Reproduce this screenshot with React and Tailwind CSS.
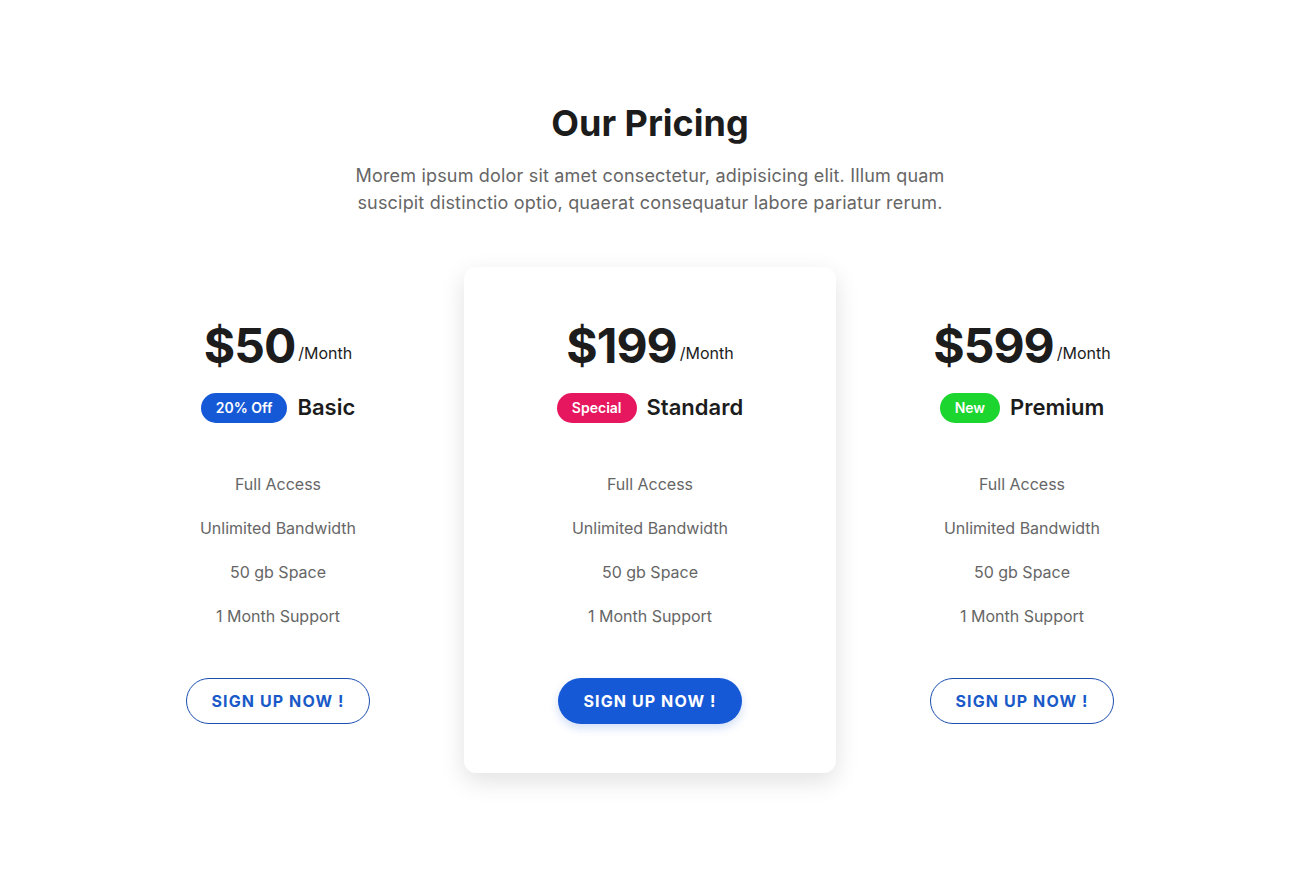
import React from 'react';

const plans = [
    { price: '$50', name: 'Basic', badge: '20% Off', badgeClass: 'bg-[#1659d6]', featured: false },
    { price: '$199', name: 'Standard', badge: 'Special', badgeClass: 'bg-[#e6175e]', featured: true },
    { price: '$599', name: 'Premium', badge: 'New', badgeClass: 'bg-[#1dd52f]', featured: false },
];

const features = ['Full Access', 'Unlimited Bandwidth', '50 gb Space', '1 Month Support'];

function PlanCard({ plan }) {
    return (
        <div
            className={
                'flex flex-col items-center pt-[55px] pb-[49px] rounded-xl ' +
                (plan.featured ? 'bg-white shadow-[0_8px_24px_rgba(0,0,0,0.12)]' : '')
            }
        >
            <div className="flex items-baseline">
                <span className="text-[48px] leading-[48px] font-bold text-[#1c1c1c] tracking-[-1px]">{plan.price}</span>
                <span className="text-base text-[#1c1c1c] ml-[3px] -translate-y-1">/Month</span>
            </div>

            <div className="flex items-center gap-[10px] mt-[21px]">
                <span className={'h-[30px] px-[15px] rounded-full flex items-center text-white text-sm font-semibold ' + plan.badgeClass}>
                    {plan.badge}
                </span>
                <span className="text-[22px] font-semibold text-[#1c1c1c]">{plan.name}</span>
            </div>

            <ul className="flex flex-col items-center gap-5 mt-[48px]">
                {features.map((f) => (
                    <li key={f} className="text-base leading-6 text-[#666666]">{f}</li>
                ))}
            </ul>

            <button
                className={
                    'mt-[50px] w-[184px] h-[46px] rounded-full text-base font-bold uppercase tracking-[1.1px] ' +
                    (plan.featured
                        ? 'bg-[#1659d6] text-white shadow-[0_4px_10px_rgba(22,89,214,0.2)]'
                        : 'border border-[#1a4fb0] text-[#1a5ac8] bg-white')
                }
            >
                Sign up now !
            </button>
        </div>
    );
}

export default function App() {
    return (
        <div className="w-full min-h-[880px] bg-white font-['Inter',sans-serif]">
            <section className="pt-[101px] flex flex-col items-center">
                <h2 className="text-[36px] leading-[44px] font-bold text-[#1c1c1c]">Our Pricing</h2>
                <p className="mt-[17px] max-w-[610px] text-center text-lg leading-[27px] tracking-[0.18px] text-[#666666]">
                    Morem ipsum dolor sit amet consectetur, adipisicing elit. Illum quam suscipit distinctio optio, quaerat consequatur labore pariatur rerum.
                </p>

                <div className="mt-[51px] grid grid-cols-3 w-[1116px]">
                    {plans.map((p) => (
                        <PlanCard key={p.name} plan={p} />
                    ))}
                </div>
            </section>
        </div>
    );
}
